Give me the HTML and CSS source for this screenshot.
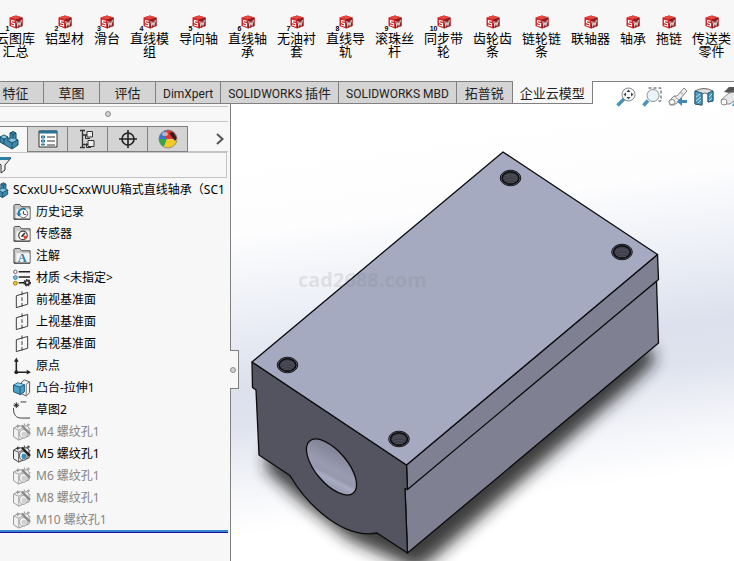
FILE: index.html
```
<!DOCTYPE html>
<html lang="zh-CN">
<head>
<meta charset="utf-8">
<title>SCxxUU+SCxxWUU箱式直线轴承</title>
<link rel="stylesheet" href="styles.css">
</head>
<body>
<svg class="defs" aria-hidden="true">
  <defs>
    <symbol id="cube" viewBox="0 0 14 14">
      <path d="M.5 2.500L7 .5L13.500 2.500V11L7 13.500L.5 11Z" fill="#cf2528"/>
      <path d="M.5 2.500L7 .5L13.500 2.500L7 4.500Z" fill="#e2483f"/>
      <path d="M7 4.500L13.500 2.500V11L7 13.500Z" fill="#8f1a1d"/>
      <path d="M5.800 6.300L2.500 5.500V7.700L5.500 8.700V11L2 10" fill="none" stroke="#fff" stroke-width="1.100"/>
      <path d="M7.800 6L8.700 10.800L10 7.500L11 10.300L12.500 5" fill="none" stroke="#d8d0d0" stroke-width="1.100"/>
    </symbol>
    <symbol id="part" viewBox="0 0 20 20">
      <path d="M1 7L5 5L9 7V9L11 8V3L14 1.500L17 3V9L19 10V15L13 19L1 12Z" fill="#3f8bb0" stroke="#184b66"/>
      <path d="M1 7L5 9V14M5 9L9 7M8 10L13 13V18.500M13 13L19 10M11 3L14 4.500V9M14 4.500L17 3" fill="none" stroke="#184b66"/>
      <path d="M2 7L5 5.500L8 7L5 8.500ZM9.500 10L14 8.500L17.500 10L13 12.300Z" fill="#8cc6df"/>
    </symbol>
    <symbol id="folder" viewBox="0 0 19 18">
      <path d="M1 16.500V2L2 1H7L9 3.500H18V16.500Z" fill="#c9c9c9" stroke="#444"/>
      <path d="M3.500 6H17.500V16H3.500Z" fill="#f3f3f3"/>
      <path d="M1 16.500H18" stroke="#333"/>
    </symbol>
    <symbol id="history" viewBox="0 0 19 18">
      <use href="#folder" width="19" height="18"/>
      <circle cx="11" cy="10.500" r="4.500" fill="#fff" stroke="#666"/>
      <path d="M6.500 13A5 5 0 0 1 13 6" fill="none" stroke="#267ea8" stroke-width="2"/>
      <path d="M3.500 10.500H9L6.500 14Z" fill="#267ea8"/>
      <path d="M11 8V11L14 12" fill="none" stroke="#333"/>
    </symbol>
    <symbol id="sensor" viewBox="0 0 19 18">
      <use href="#folder" width="19" height="18"/>
      <circle cx="10.500" cy="10.500" r="4.500" fill="#fff" stroke="#444" stroke-width="1.300"/>
      <path d="M10.500 10.500L15 11A4.500 4.500 0 0 1 12 14.700Z" fill="#e2452c"/>
      <path d="M9 12L12.500 8" stroke="#222" stroke-width="1.500"/>
    </symbol>
    <symbol id="note" viewBox="0 0 19 18">
      <use href="#folder" width="19" height="18"/>
      <text x="5" y="15.500" font-size="13" font-weight="700" fill="#2d7fa6">A</text>
    </symbol>
    <symbol id="material" viewBox="0 0 19 18">
      <path d="M6 2.500H18M6 8H18M6 14H12" stroke="#222" stroke-width="1.600"/>
      <circle cx="2.500" cy="2.500" r="1.800" fill="#fff" stroke="#555"/>
      <circle cx="2.500" cy="8.500" r="2" fill="#7cc0df" stroke="#34799c"/>
      <circle cx="2.500" cy="14.500" r="2" fill="#f3c92b" stroke="#9a7a10"/>
      <circle cx="15" cy="14" r="3" fill="#333" stroke="#333" stroke-width="2" stroke-dasharray="1.500 1"/>
      <circle cx="15" cy="14" r="1.200" fill="#f7f7f7"/>
    </symbol>
    <symbol id="plane" viewBox="0 0 19 18">
      <path d="M3.500 4.500L15.500 1V13.500L3.500 17Z" fill="none" stroke="#333"/>
      <path d="M9.500 0V18" stroke="#333" stroke-dasharray="4 2"/>
    </symbol>
    <symbol id="origin" viewBox="0 0 19 18">
      <path d="M3.500 3V15.500H16" fill="none" stroke="#222" stroke-width="1.600"/>
      <path d="M3.500 0L6 4.500H1ZM19 15.500L14.500 13V18Z" fill="#222"/>
      <circle cx="3.500" cy="15.500" r="2" fill="#222"/>
    </symbol>
    <symbol id="extrude" viewBox="0 0 19 18">
      <path d="M9 3L12 .5L17.500 2.500V14L14 17.500L9 15Z" fill="#f4f4f4" stroke="#555"/>
      <path d="M14 5V17M14 5L17.500 2.500" stroke="#777"/>
      <path d="M.5 6L5 3.500L12 5.500V13L8 16L.5 13Z" fill="#4aa0c6" stroke="#1b5472"/>
      <path d="M1 6L5 4L11.500 5.700L7.500 8Z" fill="#8bd0ea"/>
      <path d="M7.500 8V16M.5 6L7.500 8L12 5.500" fill="none" stroke="#1b5472"/>
    </symbol>
    <symbol id="sketch" viewBox="0 0 19 18">
      <path d="M8 .5H14M.5 7C.5 14 3 17.500 9 17.500H18" fill="none" stroke="#333"/>
      <path d="M3.500 1V7M.5 4H6.500M1.500 2L5.500 6M5.500 2L1.500 6" stroke="#222"/>
    </symbol>
    <symbol id="hole" viewBox="0 0 19 18">
      <path d="M.5 5L5 2.500H15L17 5V13L6 17.500L.5 14Z" fill="#eee" stroke="#333"/>
      <path d="M.5 5L6 7V17.500M6 7L10 5" fill="none" stroke="#555"/>
      <ellipse cx="11" cy="11" rx="4" ry="4.500" fill="#fff" stroke="#444"/>
      <ellipse cx="11.500" cy="11.500" rx="2.500" ry="3" fill="currentColor"/>
      <path d="M9.500 2.500L18 11" stroke="#222" stroke-width="2.500"/>
      <path d="M5 1V5M3 3H7M12 0V2M16 0V3M14.500 1.500H18M18 5V6" stroke="#333"/>
    </symbol>
    <symbol id="thread" viewBox="0 0 24 18">
      <ellipse cx="12" cy="9" rx="10.300" ry="7.800" fill="#6d707e" stroke="#16161a"/>
      <ellipse cx="12" cy="9" rx="8.500" ry="6.300" fill="#3b3c46" stroke="#0c0c0e" stroke-width="1.500"/>
      <path d="M6 7Q12 4 18 7M5 9.500Q12 6 19 9.500M6 12Q12 8.500 18 12M8 14Q12 11.500 16 14" fill="none" stroke="#585a66" stroke-width=".8"/>
    </symbol>
  </defs>
</svg>

<header class="ribbon">
  <button class="cmd"><span class="cmd-icon"><svg><use href="#cube"/></svg><b>1</b></span>云图库汇总</button>
  <button class="cmd"><span class="cmd-icon"><svg><use href="#cube"/></svg><b>2</b></span>铝型材</button>
  <button class="cmd short"><span class="cmd-icon"><svg><use href="#cube"/></svg><b>3</b></span>滑台</button>
  <button class="cmd"><span class="cmd-icon"><svg><use href="#cube"/></svg><b>4</b></span>直线模组</button>
  <button class="cmd"><span class="cmd-icon"><svg><use href="#cube"/></svg><b>5</b></span>导向轴</button>
  <button class="cmd"><span class="cmd-icon"><svg><use href="#cube"/></svg><b>6</b></span>直线轴承</button>
  <button class="cmd"><span class="cmd-icon"><svg><use href="#cube"/></svg><b>7</b></span>无油衬套</button>
  <button class="cmd"><span class="cmd-icon"><svg><use href="#cube"/></svg><b>8</b></span>直线导轨</button>
  <button class="cmd"><span class="cmd-icon"><svg><use href="#cube"/></svg><b>9</b></span>滚珠丝杆</button>
  <button class="cmd"><span class="cmd-icon"><svg><use href="#cube"/></svg><b>10</b></span>同步带轮</button>
  <button class="cmd"><span class="cmd-icon"><svg><use href="#cube"/></svg></span>齿轮齿条</button>
  <button class="cmd"><span class="cmd-icon"><svg><use href="#cube"/></svg></span>链轮链条</button>
  <button class="cmd"><span class="cmd-icon"><svg><use href="#cube"/></svg></span>联轴器</button>
  <button class="cmd short"><span class="cmd-icon"><svg><use href="#cube"/></svg></span>轴承</button>
  <button class="cmd short"><span class="cmd-icon"><svg><use href="#cube"/></svg></span>拖链</button>
  <button class="cmd"><span class="cmd-icon"><svg><use href="#cube"/></svg></span>传送类零件</button>
</header>

<main class="workspace">
  <nav class="tabs">
    <button>特征</button><button>草图</button><button>评估</button><button><span class="latin">DimXpert</span></button><button><span class="latin">SOLIDWORKS</span> 插件</button><button><span class="latin">SOLIDWORKS MBD</span></button><button>拓普锐</button><button class="active">企业云模型</button>
  </nav>

  <div class="hud">
    <button aria-label="整屏显示全图"><svg viewBox="0 0 20 20"><path d="M1.500 18.500L8 12" stroke="#4b93b8" stroke-width="3.500"/><circle cx="12.500" cy="7.500" r="6.500" fill="#f4f8fa" stroke="#888"/><path d="M12.500 2.500L14.500 5H10.500ZM12.500 12.500L10.500 10H14.500ZM7.500 7.500L10 5.500V9.500ZM17.500 7.500L15 9.500V5.500Z" fill="#444"/></svg></button>
    <button aria-label="局部放大"><svg viewBox="0 0 20 20"><path d="M6.500 1H19V14H15" fill="none" stroke="#444" stroke-dasharray="3 2"/><path d="M1.500 18.500L6 13.500" stroke="#4b93b8" stroke-width="3.500"/><circle cx="11" cy="8.500" r="6" fill="#e9f4fa" stroke="#8d9296"/></svg></button>
    <button aria-label="上一视图"><svg viewBox="0 0 20 20"><path d="M1 14L6 9L9 9L16 1L19 4L12 12V14L6 18H2Z" fill="#ececec" stroke="#888"/><path d="M6 9L12 14M12 5L16 8" stroke="#999"/><ellipse cx="4" cy="15" rx="3" ry="2.500" fill="#fff" stroke="#888"/><path d="M9 14.500L14 10V13H19V16H14V19Z" fill="#3d8bb5"/></svg></button>
    <button aria-label="剖面视图"><svg viewBox="0 0 20 20"><path d="M1 4Q10 -1 19 4V14L14 15V7Q10 5 8 7V18L1 17Z" fill="#dedede" stroke="#666"/><path d="M1 4L8 6V18L1 17ZM14 6L19 4V14L14 15Z" fill="#4b9ac0" stroke="#255b78"/><path d="M2 10L6 7M2 14L7 10M4 16L7 13M15 10L18 7M15 14L18 11" stroke="#b4dceb"/></svg></button>
    <button aria-label="视图定向"><svg viewBox="0 0 20 20"><path d="M4 5L9 0H20L15 7Z" fill="#555"/><path d="M1 13L9 6L14 5L19 10L10 17H3Z" fill="#e6e6e6" stroke="#888"/><ellipse cx="4" cy="15" rx="3" ry="3" fill="#fff" stroke="#888"/><path d="M12 19L17 9L20 19Z" fill="#4b9ac0"/></svg></button>
  </div>

  <div class="panes">
    <aside class="sidebar">
      <div class="grip"><i class="dot"></i></div>
      <div class="panel-tabs">
        <button class="first" aria-label="设计树"><svg viewBox="0 0 20 20"><use href="#part"/></svg></button>
        <button aria-label="属性"><svg viewBox="0 0 20 20"><path d="M1 2H19V18H1Z" fill="#fff" stroke="#333"/><path d="M1 1.500H19V4.500H1Z" fill="#2a7397"/><path d="M3.500 7H6.500V9H3.500ZM3.500 11H6.500V13H3.500ZM3.500 15H6.500V16H3.500Z" fill="#8cc8df" stroke="#2a7397"/><path d="M9 8H17M9 12H17M9 16H17" stroke="#333"/></svg></button>
        <button aria-label="配置"><svg viewBox="0 0 20 20"><path d="M4.500 1V18M2 1.500H7M4.500 6H9M4.500 15.500H10M2 18.500H7" fill="none" stroke="#333" stroke-width="1.300"/><path d="M9 2.500H14.500V8H9ZM10 11.500H16V17.500H10Z" fill="#eee" stroke="#333"/><path d="M7.500 5.500V9.500H12M8.500 14.500V18.500H13" fill="none" stroke="#333"/></svg></button>
        <button aria-label="尺寸专家"><svg viewBox="0 0 20 20"><circle cx="10" cy="10" r="6" fill="none" stroke="#222" stroke-width="1.600"/><path d="M10 1V19M1 10H19" stroke="#222" stroke-width="1.600"/></svg></button>
        <button aria-label="外观"><svg viewBox="0 0 20 20"><path d="M10 10H1A9 9 0 0 1 10 1Z" fill="#3977d0"/><path d="M10 1A9 9 0 0 1 19 10L10 10Z" fill="#d8382d"/><path d="M1 10H9L6 18Q1 15 1 10Z" fill="#37a548"/><path d="M9 10L19 11A9 9 0 0 1 6 18Z" fill="#f3ca27"/><path d="M9 1.500Q4 5 9 10L12 10V1Z" fill="#e53a31"/><path d="M11 4L15 3L19 9L17 12Z" fill="#33201e"/><circle cx="10" cy="10" r="9" fill="none" stroke="#777" stroke-width=".7"/><ellipse cx="7" cy="5" rx="3" ry="2" fill="#fff" opacity=".5"/></svg></button>
        <button class="more" aria-label="更多"><svg viewBox="0 0 10 12"><path d="M2 1L7.500 6L2 11" fill="none" stroke="#555" stroke-width="2"/></svg></button>
      </div>
      <label class="filter">
        <svg viewBox="0 0 17 18"><path d="M0 3L6 9V17L10 14V9L16 2Z" fill="#eee" stroke="#333"/><path d="M0 1H16L14 4H1Z" fill="#2c7ea5"/></svg>
        <input type="text" aria-label="过滤">
      </label>
      <ul class="tree">
        <li class="root"><button><svg viewBox="0 0 19 18"><use href="#part"/></svg><span>SCxxUU+SCxxWUU箱式直线轴承（SC1</span></button></li>
        <li><button><svg><use href="#history"/></svg>历史记录</button></li>
        <li><button><svg><use href="#sensor"/></svg>传感器</button></li>
        <li><button><svg><use href="#note"/></svg>注解</button></li>
        <li><button><svg><use href="#material"/></svg>材质 &lt;未指定&gt;</button></li>
        <li><button><svg><use href="#plane"/></svg>前视基准面</button></li>
        <li><button><svg><use href="#plane"/></svg>上视基准面</button></li>
        <li><button><svg><use href="#plane"/></svg>右视基准面</button></li>
        <li><button><svg><use href="#origin"/></svg>原点</button></li>
        <li><button><svg><use href="#extrude"/></svg>凸台-拉伸1</button></li>
        <li><button><svg><use href="#sketch"/></svg>草图2</button></li>
        <li class="off"><button><svg><use href="#hole"/></svg>M4 螺纹孔1</button></li>
        <li><button><svg><use href="#hole"/></svg>M5 螺纹孔1</button></li>
        <li class="off"><button><svg><use href="#hole"/></svg>M6 螺纹孔1</button></li>
        <li class="off"><button><svg><use href="#hole"/></svg>M8 螺纹孔1</button></li>
        <li class="off"><button><svg><use href="#hole"/></svg>M10 螺纹孔1</button></li>
      </ul>
      <div class="rollback"></div>
    </aside>

    <section class="viewport">
      <button class="splitter" aria-label="折叠面板"><i class="dot"></i></button>
      <svg class="model" viewBox="231 104 503 457" role="img" aria-label="箱式直线轴承模型">
        <defs>
          <filter id="soft" x="-20%" y="-20%" width="140%" height="140%"><feGaussianBlur stdDeviation="8"/></filter>
          <linearGradient id="bore" x1="0" y1="0.1" x2="0.8" y2="1">
            <stop offset="0" stop-color="#797b8d"/><stop offset=".55" stop-color="#9a9db2"/><stop offset=".68" stop-color="#9698ad"/><stop offset=".76" stop-color="#a9adc3"/><stop offset="1" stop-color="#8e91a5"/>
          </linearGradient>
        </defs>
        <path d="M268 448L648 345L656 360L634 382L436 556L416 570L396 560L350 540L300 500L266 470Z" fill="#1c1c1c" opacity=".85" filter="url(#soft)"/>
        <g stroke="#0b0b0d" stroke-width="1.300" stroke-linejoin="round">
          <path d="M405 488L656.500 281L658.500 343L407.500 553Z" fill="#7f8193"/>
          <path d="M406.500 465L657.500 254.500L658.500 279.500L407.500 489.500Z" fill="#7f8193"/>
          <path d="M252 362L406.500 465L407.500 489.500L405 488.500L407.500 553L377 533C345 539 309 508 290 475.500L259 455L256 390L252.500 387.500Z" fill="#53545f"/>
          <path d="M252 362L503 152L657.500 254.500L406.500 465Z" fill="#a5aac0"/>
          <ellipse cx="331.500" cy="467" rx="34" ry="16" transform="rotate(50 331.500 467)" fill="url(#bore)"/>
        </g>
        <use href="#thread" x="498.500" y="169" width="24" height="18"/>
        <use href="#thread" x="610" y="243" width="24" height="18"/>
        <use href="#thread" x="275.500" y="356" width="24" height="18"/>
        <use href="#thread" x="387" y="430" width="24" height="18"/>
        <text class="watermark" x="298" y="287">cad2688.com</text>
      </svg>
    </section>
  </div>
</main>
</body>
</html>
```

FILE: styles.css
```
* { box-sizing: border-box; }

body {
  margin: 0;
  min-height: 100vh;
  display: flex;
  flex-direction: column;
  overflow: hidden;
  background: #f7f7f7;
  color: #000;
  font: 12px/22px "Noto Sans", "Noto Sans CJK SC", sans-serif;
}

button {
  border: 0;
  padding: 0;
  background: none;
  color: inherit;
  font: inherit;
}

svg { display: block; flex: none; }
.defs { position: absolute; width: 0; height: 0; }
.defs text { font-family: "Liberation Serif", serif; }

.dot {
  display: block;
  width: 6px;
  height: 6px;
  border: 1px solid #8c8c8c;
  border-radius: 50%;
  background: #d0d0d0;
}

/* Command ribbon */
.ribbon {
  display: flex;
  align-items: flex-start;
  gap: 10px;
  height: 82px;
  padding-top: 15px;
  margin-left: -4px;
  border-bottom: 1px solid #808080;
}
.cmd {
  flex: none;
  width: 39px;
  font-size: 13px;
  line-height: 13px;
  text-align: center;
  word-break: break-all;
}
.short { width: 26px; }
.cmd-icon {
  display: block;
  position: relative;
  width: 14px;
  height: 14px;
  margin: 0 auto 3px;
}
.cmd-icon svg { width: 14px; height: 14px; }
.cmd-icon b {
  position: absolute;
  right: 13px;
  top: 10px;
  font: bold 7px/7px "Liberation Sans", sans-serif;
  white-space: nowrap;
  word-break: normal;
}

/* Workspace */
.workspace {
  position: relative;
  flex: 1;
  display: flex;
  flex-direction: column;
  background: linear-gradient(172deg, #fff 18%, #fdfdfe 32%, #eceff6 46%, #dde1ed 58%, #dfe3ee 65%, #f5f6fa 76%, #fff 84%);
}
.tabs { display: flex; margin-left: -12px; }
.tabs button {
  min-width: 56px;
  height: 22px;
  padding: 0 7px;
  border: solid #808080;
  border-width: 0 1px 1px 0;
  background: #d4d4d4;
  color: #222;
  font-family: "Noto Sans CJK SC", sans-serif;
  font-size: 13px;
  line-height: 21px;
  white-space: nowrap;
}
.tabs .latin { font-family: Roboto, sans-serif; font-size: 12px; }
.tabs .active {
  height: 23px;
  margin-top: -1px;
  background: #f7f7f7;
}
.hud {
  position: absolute;
  top: 5px;
  right: -6px;
  display: flex;
  gap: 6px;
}
.hud svg { width: 20px; height: 20px; }

.panes { flex: 1; display: flex; }

/* Feature tree panel */
.sidebar {
  flex: none;
  width: 231px;
  padding: 2px 2px 0 0;
  border-right: 1px solid #808080;
  background: #f7f7f7;
}
.grip {
  display: flex;
  align-items: center;
  justify-content: center;
  height: 16px;
  margin-bottom: 4px;
  padding-right: 12px;
  border: solid #c4c4c4;
  border-width: 1px 0;
}
.panel-tabs { display: flex; height: 26px; border-bottom: 1px solid #c4c4c4; }
.panel-tabs button {
  display: flex;
  align-items: center;
  justify-content: center;
  width: 40px;
  height: 26px;
  border: 1px solid #808080;
  border-left: 0;
  background: #d4d4d4;
}
.panel-tabs svg { width: 20px; height: 20px; }
.panel-tabs .first {
  width: 28px;
  padding-right: 10px;
  border-bottom: 0;
  background: #f7f7f7;
}
.panel-tabs .more { flex: 1; padding-left: 24px; border: 0; background: none; }
.panel-tabs .more svg { width: 10px; height: 12px; }

.filter {
  display: flex;
  align-items: center;
  height: 26px;
  margin: 0 1px 0 -6px;
  border: 1px solid #c4c4c4;
}
.filter svg { width: 17px; height: 18px; }
.filter input {
  flex: 1;
  min-width: 0;
  height: 22px;
  border: 0;
  background: none;
  font: inherit;
}

.tree { list-style: none; margin: 0; padding: 0; }
.tree button {
  display: flex;
  align-items: center;
  gap: 5px;
  width: 100%;
  height: 22px;
  padding: 2px 0 0 13px;
  overflow: hidden;
  white-space: nowrap;
}
.tree svg { width: 18px; height: 18px; color: #398cb5; }
.tree .root button { gap: 4px; padding-left: 0; }
.tree .root svg { margin-left: -9px; }
.tree .off { color: #858585; }
.tree .off svg { color: #aaa; opacity: .5; }
.rollback { height: 3px; background: #3488cb; border-bottom: 1px solid #1a0f9c; }

/* Graphics area */
.viewport { position: relative; flex: 1; min-width: 0; }
.model { width: 100%; }
.splitter {
  position: absolute;
  left: -1px;
  top: 246px;
  display: flex;
  align-items: center;
  width: 9px;
  height: 39px;
  border: 1px solid #808080;
  border-left: 0;
  background: #f7f7f7;
}
.watermark {
  font: bold 20px "Open Sans", sans-serif;
  fill: #777;
  opacity: .16;
}
```
